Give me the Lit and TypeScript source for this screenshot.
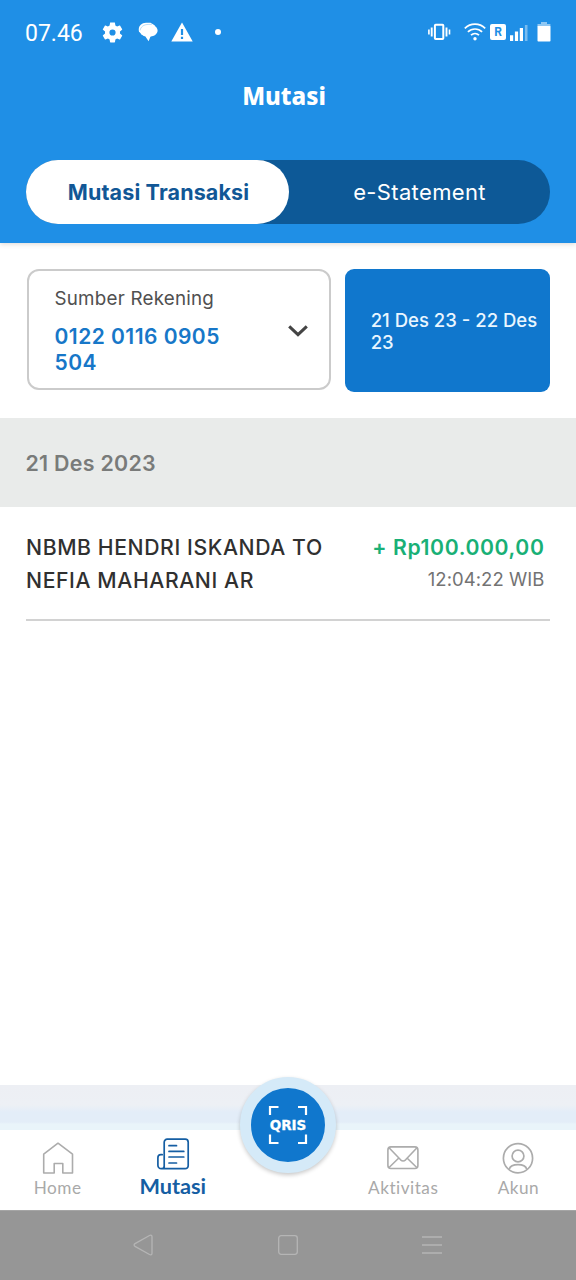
import { LitElement, html, css, svg } from "lit";
import { customElement } from "lit/decorators.js";

const gear = svg`<svg width="21" height="21" viewBox="1.5 1.5 21 21"><path fill="#fff" d="M19.43 12.98c.04-.32.07-.64.07-.98s-.03-.66-.07-.98l2.11-1.65c.19-.15.24-.42.12-.64l-2-3.46c-.12-.22-.39-.3-.61-.22l-2.49 1c-.52-.4-1.08-.73-1.69-.98l-.38-2.65C14.46 2.18 14.25 2 14 2h-4c-.25 0-.46.18-.49.42l-.38 2.65c-.61.25-1.17.59-1.69.98l-2.49-1c-.23-.09-.49 0-.61.22l-2 3.46c-.13.22-.07.49.12.64l2.11 1.65c-.04.32-.07.65-.07.98s.03.66.07.98l-2.11 1.65c-.19.15-.24.42-.12.64l2 3.46c.12.22.39.3.61.22l2.49-1c.52.4 1.08.73 1.69.98l.38 2.65c.03.24.24.42.49.42h4c.25 0 .46-.18.49-.42l.38-2.65c.61-.25 1.17-.59 1.69-.98l2.49 1c.23.09.49 0 .61-.22l2-3.46c.12-.22.07-.49-.12-.64zM12 15.1a3.1 3.1 0 1 1 0-6.2 3.1 3.1 0 0 1 0 6.2z"/></svg>`;

const chat = svg`<svg width="20" height="20" viewBox="0 0 20 20"><path d="M1 9.500C-.2 4.500 3 1 8 .8h4.500L17 3.500 4 13z" fill="#fff"/><path fill="#fff" d="M11 2.400c5 0 8.600 2.500 8.600 6.200 0 3.400-3.300 5.700-7.200 6.100L10.600 19.200 7.400 14.600C4.200 13.800 2.200 11.600 2.200 8.600 2.200 4.900 6 2.400 11 2.400z"/><path d="M2.200 8.400c.3-3.600 3.600-6 8.600-6h3" fill="none" stroke="#1f8fe6" stroke-opacity=".5" stroke-width=".6"/></svg>`;

const warning = svg`<svg width="22" height="20" viewBox="0 0 22 20"><path fill="#fff" d="M11 .4 21.700 19.400H.3z"/><path d="M11 7v6M11 14.800v2.200" stroke="#1f8fe6" stroke-width="2.200"/></svg>`;

const vibrate = svg`<svg width="24" height="18" viewBox="0 0 24 18"><g fill="none" stroke="#fff"><rect x="6.900" y="1.800" width="8.400" height="14.200" rx=".8" stroke-width="2"/><path d="M3.700 4.500v9M18.500 4.500v9" stroke-width="1.900"/><path d="M.9 6.500v5M21.500 6.500v5" stroke-width="1.600"/></g></svg>`;

const wifi = svg`<svg width="22" height="18" viewBox="0 0 22 18"><g fill="none" stroke="#fff" stroke-width="1.700"><path d="M.8 5.300C6.500-.3 15.500-.3 21.200 5.300"/><path d="M3.900 8.900c4-3.900 10.200-3.900 14.200 0"/><path d="M7 12.200c2.300-2.200 5.700-2.200 8 0"/></g><circle cx="11" cy="15.700" r="1.700" fill="#fff"/></svg>`;

const signal = svg`<svg width="19" height="17" viewBox="0 0 19 17"><path fill="#fff" d="M0 11.300h3.200V17H0zM4.900 7.600h3.200V17H4.900zM9.800 4h3.200v13H9.800z"/><path fill="#fff" fill-opacity=".4" d="M14.900 1h2.600v16h-2.600z"/></svg>`;

const battery = svg`<svg width="14" height="20" viewBox="0 0 14 20"><path fill="#fff" fill-opacity=".5" d="M4 0h6v2h3.400v3H.5V2H4z"/><rect x=".5" y="4" width="13" height="15.600" rx=".8" fill="#fff"/></svg>`;

const home = svg`<svg width="34" height="34" viewBox="0 0 34 34"><path d="M2.700 32V13.200L17 2.200l14.500 11V32H21.800V22.500h-8.600V32z" fill="none" stroke="#acacac" stroke-width="1.600" stroke-linejoin="round"/></svg>`;

const paper = svg`<svg width="34" height="34" viewBox="0 0 34 34"><g fill="none" stroke="#155ea3" stroke-width="1.700" stroke-linecap="round" stroke-linejoin="round"><path d="M8.200 30.400V5.200a3 3 0 0 1 3-3h18a3 3 0 0 1 3 3v23.500a3 3 0 0 1-3 3H5.300a3.400 3.400 0 0 1-3.400-3.400v-7.600c0-1.800 1.200-3 3-3h1.300M8.200 26.500v2.500a2.700 2.700 0 0 1-2.700 2.700"/><path d="M13 8.700h7.500M13 14.400h14.800M13 20h14.800M13 26h7.500"/></g></svg>`;

const mail = svg`<svg width="34" height="34" viewBox="0 0 34 34"><g fill="none" stroke="#acacac" stroke-width="1.600" stroke-linejoin="round"><rect x="1.900" y="5.900" width="30" height="21.600" rx="3"/><path d="M3 6.800 14.600 18.800c1.800 1.700 3.200 1.700 5 0L31 6.800M2.800 26.700l10-9.700M31 26.700l-10-9.700"/></g></svg>`;

const person = svg`<svg width="34" height="34" viewBox="0 0 34 34"><g fill="none" stroke="#acacac" stroke-width="1.700"><circle cx="17" cy="17.200" r="14.600"/><circle cx="17" cy="15" r="5.900"/><path d="M8.200 28.200c1-3.200 4-4.500 8.800-4.500s7.800 1.300 8.800 4.500"/></g></svg>`;

const frame = svg`<svg class="frame" width="40" height="40" viewBox="0 0 40 40"><path d="M2 10V2h8.500M30 2h8v8M38 29.500V38h-8M10.500 38H2v-8.500" fill="none" stroke="#fff" stroke-width="2.200"/></svg>`;

@customElement("app-root")
export class AppRoot extends LitElement {
  static styles = css`
    :host {
      display: flex;
      flex-direction: column;
      width: 576px;
      height: 1280px;
      overflow: hidden;
      background: #fff;
      font-family: Inter, "Liberation Sans", sans-serif;
      white-space: nowrap;
    }
    * { box-sizing: border-box; }
    svg { display: block; flex: none; }
    header {
      flex: none;
      height: 243px;
      background: #1f8fe6;
      box-shadow: 0 1px 5px rgba(80, 60, 40, 0.2);
      color: #fff;
    }
    .status {
      display: flex;
      align-items: center;
      height: 64px;
      padding: 0 25px 0 25px;
    }
    .clock {
      width: 76.500px;
      font: 400 23px/24px Roboto, sans-serif;
      padding-top: 3px;
    }
    .chat { margin-left: 15px; }
    .warn { margin-left: 13.500px; }
    .dot { width: 6px; height: 6px; margin-left: 21.500px; border-radius: 50%; background: #fff; }
    .right { display: flex; align-items: center; margin-left: auto; }
    .wifi { margin-left: 12px; }
    .roam {
      width: 16px;
      height: 16px;
      margin-left: 4px;
      border-radius: 2px;
      background: #fff;
      color: #1f8fe6;
      font: 700 12px/17px Roboto, sans-serif;
      text-align: center;
    }
    .signal { margin-left: 4px; }
    .battery { margin-left: 8px; }
    h1 {
      margin: 0;
      height: 64px;
      padding-right: 8px;
      font: 800 24px/64px "Noto Sans", sans-serif;
      text-align: center;
    }
    .tabs {
      display: flex;
      width: 524px;
      height: 64px;
      margin: 32px 0 0 26px;
      border-radius: 32px;
      background: #0d5997;
      line-height: 64px;
      text-align: center;
    }
    .tab { flex: 1 1 0; padding-left: 1px; font-size: 22px; border-radius: 32px; letter-spacing: 0.350px; }
    .on { padding-left: 2px; margin-right: -1px; background: #fff; color: #115796; font-size: 21.500px; font-weight: 700; letter-spacing: 0.150px; }
    .filters {
      display: flex;
      flex: none;
      height: 175px;
      padding: 26px 26px 0 27px;
    }
    .account {
      display: flex;
      align-items: center;
      width: 304px;
      height: 121px;
      padding: 0 21px 0 25.500px;
      border: 2px solid #cbcbcb;
      border-radius: 12px;
    }
    .account svg { margin-top: 2px; }
    .source { flex: 1; padding-top: 2px; }
    .caption { color: #505050; font-size: 18.800px; line-height: 28px; letter-spacing: 0.220px; }
    .number {
      margin-top: 11px;
      color: #1777c8;
      font-size: 21px;
      font-weight: 600;
      line-height: 26px;
      letter-spacing: 0.460px;
    }
    .range {
      display: flex;
      align-items: center;
      width: 205px;
      height: 123px;
      margin-left: 14.500px;
      padding: 1px 0 0 25.500px;
      border-radius: 9px;
      background: #1077cd;
      color: #e9f6ff;
      font-size: 18.500px;
      font-weight: 500;
      line-height: 22.300px;
    }
    .day {
      flex: none;
      height: 89px;
      padding-left: 25.500px;
      background: #e9ebea;
      color: #797b7a;
      font-size: 21.400px;
      font-weight: 600;
      line-height: 90px;
      letter-spacing: 0.280px;
    }
    .entry {
      display: flex;
      flex: none;
      justify-content: space-between;
      height: 114px;
      margin: 0 26px;
      padding: 24px 5.500px 0 0;
      border-bottom: 2px solid #d2d2d2;
      line-height: 33px;
    }
    .who { color: #303030; font-size: 21.200px; font-weight: 500; letter-spacing: 0.600px; margin-top: -0.500px; }
    .sum { text-align: right; }
    .amount { color: #19b076; font-size: 21.200px; font-weight: 600; letter-spacing: 0.600px; line-height: 32px; }
    .time { color: #737373; font-size: 18.500px; letter-spacing: 0.050px; line-height: 33px; }
    .strip {
      flex: none;
      height: 45px;
      margin-top: auto;
      background: linear-gradient(#edeff4 0, #edf0f5 20px, #e3edf8 27px, #e3edf8 37px, #e9f4fa 39px, #e9f4fa 45px);
    }
    nav {
      position: relative;
      display: grid;
      grid-template-columns: repeat(5, 1fr);
      flex: none;
      height: 80px;
      background: #fff;
    }
    .item {
      display: flex;
      flex-direction: column;
      align-items: center;
      padding-top: 11px;
      color: #a9a9a9;
      font-family: Lato, sans-serif;
      font-size: 17.200px;
      line-height: 25px;
      letter-spacing: 0.500px;
    }
    .active {
      padding-top: 6.500px;
      color: #155ea3;
      font-size: 21.700px;
      font-weight: 700;
      line-height: 30px;
      letter-spacing: 0;
    }
    .scan {
      position: absolute;
      left: 240px;
      top: -53px;
      display: grid;
      place-items: center;
      width: 96px;
      height: 96px;
      border: 11px solid #d5eaf8;
      border-radius: 50%;
      background: #1077cd;
      box-shadow: 0 2px 4px rgba(0, 0, 0, 0.22);
    }
    .frame, .qris { grid-area: 1 / 1; }
    .qris {
      color: #fff;
      font: 700 13.500px/16px "DejaVu Sans", sans-serif;
      -webkit-text-stroke: 0.300px #fff;
    }
    .system {
      display: grid;
      grid-template-columns: 144px 144px 144px;
      flex: none;
      place-items: center;
      justify-content: center;
      height: 70px;
      padding-bottom: 2px;
      border-top: 1px solid #a5a5a5;
      background: #969696;
    }
  `;

  render() {
    return html`
      <header>
        <div class="status">
          <span class="clock">07.46</span>
          ${gear}
          <span class="chat">${chat}</span>
          <span class="warn">${warning}</span>
          <span class="dot"></span>
          <div class="right">
            ${vibrate}
            <span class="wifi">${wifi}</span>
            <span class="roam">R</span>
            <span class="signal">${signal}</span>
            <span class="battery">${battery}</span>
          </div>
        </div>
        <h1>Mutasi</h1>
        <div class="tabs">
          <div class="tab on">Mutasi Transaksi</div>
          <div class="tab">e-Statement</div>
        </div>
      </header>
      <section class="filters">
        <div class="account">
          <div class="source">
            <div class="caption">Sumber Rekening</div>
            <div class="number">0122 0116 0905<br />504</div>
          </div>
          <svg width="20" height="12" viewBox="0 0 20 12"><path d="M1.200 1.300 10 9.700l8.800-8.400" fill="none" stroke="#444" stroke-width="3"/></svg>
        </div>
        <div class="range"><span>21 Des 23 - 22 Des<br />23</span></div>
      </section>
      <div class="day">21 Des 2023</div>
      <article class="entry">
        <div class="who">NBMB HENDRI ISKANDA TO<br />NEFIA MAHARANI AR</div>
        <div class="sum">
          <div class="amount">+ Rp100.000,00</div>
          <div class="time">12:04:22 WIB</div>
        </div>
      </article>
      <div class="strip"></div>
      <nav>
        <div class="item">${home}<span>Home</span></div>
        <div class="item active">${paper}<span>Mutasi</span></div>
        <div></div>
        <div class="item">${mail}<span>Aktivitas</span></div>
        <div class="item">${person}<span>Akun</span></div>
        <div class="scan">${frame}<span class="qris">QRIS</span></div>
      </nav>
      <footer class="system">
        <svg width="22" height="22" viewBox="0 0 22 22"><path d="M2 9.600 16.500 1.500c1.500-.7 2.500 0 2.500 1.300v16.400c0 1.300-1 2-2.500 1.300L2 12.400c-1.200-.7-1.200-2.100 0-2.800z" fill="none" stroke="#b5b5b5" stroke-width="1.300"/></svg>
        <svg width="22" height="22" viewBox="0 0 22 22"><rect x="1.700" y="1.700" width="18.600" height="18.600" rx="2.500" fill="none" stroke="#b5b5b5" stroke-width="1.300"/></svg>
        <svg width="22" height="22" viewBox="0 0 22 22"><path d="M1 3h20M1 11h20M1 19h20" stroke="#b5b5b5" stroke-width="1.300"/></svg>
      </footer>
    `;
  }
}
